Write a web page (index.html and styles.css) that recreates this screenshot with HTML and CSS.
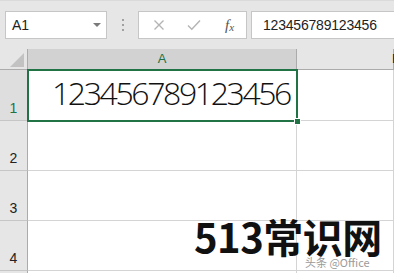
FILE: index.html
```html
<!DOCTYPE html>
<html>
<head>
<meta charset="utf-8">
<link rel="stylesheet" href="styles.css">
</head>
<body>
<div class="app">
  <div class="toolbar">
    <div class="namebox">
      <span class="name">A1</span>
      <span class="caret"></span>
    </div>
    <div class="grip"><i></i><i></i><i></i></div>
    <div class="fbuttons">
      <svg class="ico" width="12" height="12" viewBox="0 0 12 12"><path d="M1.5 1.5 L10.5 10.5 M10.5 1.5 L1.5 10.5" stroke="#b4b4b4" stroke-width="1.4" fill="none"/></svg>
      <svg class="ico" width="14" height="12" viewBox="0 0 14 12"><path d="M1 6.5 L4.8 10.2 L13 1.5" stroke="#b4b4b4" stroke-width="1.4" fill="none"/></svg>
      <span class="fx">f<sub>x</sub></span>
    </div>
    <div class="formula">123456789123456</div>
  </div>
  <div class="sheet">
    <div class="corner"><span class="tri"></span></div>
    <div class="colhead sel">A</div>
    <div class="colhead">B</div>

    <div class="rowhead sel">1</div>
    <div class="cell big">123456789123456</div>
    <div class="cell"></div>

    <div class="rowhead">2</div>
    <div class="cell"></div>
    <div class="cell"></div>

    <div class="rowhead">3</div>
    <div class="cell"></div>
    <div class="cell"></div>

    <div class="rowhead">4</div>
    <div class="cell"></div>
    <div class="cell"></div>

    <div class="rowhead"></div>
    <div class="cell"></div>
    <div class="cell"></div>

    <div class="selection"><span class="handle"></span></div>
    <div class="watermark">513常识网</div>
    <div class="credit">头条 @Office</div>
  </div>
</div>
</body>
</html>
```
FILE: styles.css
```css
* { box-sizing: border-box; }
html, body { margin: 0; padding: 0; }
body {
  width: 394px;
  height: 273px;
  overflow: hidden;
  background: #e6e6e6;
  font-family: "Liberation Sans", Arial, sans-serif;
}
.app { width: 394px; height: 273px; overflow: hidden; }
.toolbar {
  height: 49px;
  border-top: 1px solid #dadada;
  display: flex;
  align-items: flex-start;
  padding: 10px 0 0 5px;
  white-space: nowrap;
}
.namebox {
  width: 102px;
  height: 28px;
  background: #fff;
  border: 1px solid #c6c6c6;
  display: flex;
  align-items: center;
  justify-content: space-between;
  padding: 0 6px 0 6px;
  flex: none;
}
.name { font-size: 14px; color: #222; }
.caret {
  width: 0; height: 0;
  border-left: 4px solid transparent;
  border-right: 4px solid transparent;
  border-top: 4px solid #7a7a7a;
  margin-right: -1px;
}
.grip {
  width: 31px;
  height: 28px;
  display: flex;
  flex-direction: column;
  align-items: center;
  justify-content: center;
  gap: 3px;
  flex: none;
}
.grip i { display: block; width: 2px; height: 2px; background: #a0a0a0; }
.fbuttons {
  width: 109px;
  height: 28px;
  background: #fff;
  border: 1px solid #c6c6c6;
  display: flex;
  align-items: center;
  padding-left: 14px;
  flex: none;
}
.fbuttons .ico { flex: none; }
.fbuttons .ico:nth-child(2) { margin-left: 22px; }
.fx {
  margin-left: 24px;
  font-family: "Liberation Serif", "Times New Roman", serif;
  font-style: italic;
  font-size: 15px;
  color: #555;
}
.fx sub { font-size: 11px; vertical-align: -1px; }
.formula {
  margin-left: 4px;
  height: 28px;
  width: 160px;
  background: #fff;
  border: 1px solid #c6c6c6;
  border-right: none;
  font-size: 14px;
  color: #222;
  line-height: 26px;
  padding-left: 11px;
  flex: none;
  letter-spacing: -0.2px;
}
.sheet {
  position: relative;
  display: grid;
  grid-template-columns: 28px 269px 97px;
  grid-template-rows: 21px 51px 50px 50px 50px 50px;
  background: #fff;
}
.corner {
  background: #e6e6e6;
  border-right: 1px solid #ababab;
  border-bottom: 1px solid #ababab;
  position: relative;
}
.tri {
  position: absolute;
  right: 3px;
  bottom: 2px;
  width: 0; height: 0;
  border-left: 14px solid transparent;
  border-bottom: 14px solid #c2c2c2;
}
.colhead {
  background: #e6e6e6;
  border-right: 1px solid #ababab;
  border-bottom: 1px solid #ababab;
  font-size: 13px;
  text-align: center;
  line-height: 20px;
  color: #222;
}
.colhead.sel { background: #d2d2d2; color: #217346; }
.colhead:nth-child(3) { text-align: left; padding-left: 95px; }
.rowhead {
  background: #e6e6e6;
  border-right: 1px solid #ababab;
  border-bottom: 1px solid #c6c6c6;
  font-size: 14px;
  color: #222;
  display: flex;
  align-items: flex-end;
  justify-content: center;
  padding-bottom: 4px;
}
.rowhead.sel { background: #dedede; color: #217346; }
.cell {
  border-right: 1px solid #d4d4d4;
  border-bottom: 1px solid #d4d4d4;
}
.cell.big {
  font-family: "Open Sans", sans-serif;
  font-weight: 300;
  font-size: 32px;
  letter-spacing: -2.4px;
  text-align: right;
  padding-right: 6px;
  color: #111;
  line-height: 30px;
  padding-top: 8px;
  overflow: hidden;
  white-space: nowrap;
}
.selection {
  position: absolute;
  left: 27px;
  top: 20px;
  width: 271px;
  height: 53px;
  border: 2px solid #217346;
}
.handle {
  position: absolute;
  right: -5px;
  bottom: -5px;
  width: 7px;
  height: 7px;
  background: #217346;
  border: 1px solid #fff;
}
.watermark {
  position: absolute;
  left: 194px;
  top: 163px;
  font-family: "Noto Sans CJK SC", sans-serif;
  font-weight: 700;
  font-size: 40px;
  line-height: 48px;
  color: #111;
  letter-spacing: -0.5px;
  white-space: nowrap;
}
.credit {
  position: absolute;
  left: 305px;
  top: 205px;
  font-family: "Noto Sans CJK SC", sans-serif;
  font-size: 11px;
  color: #9a9a9a;
  white-space: nowrap;
  text-shadow: 0 0 2px #fff, 0 0 2px #fff;
}
```
